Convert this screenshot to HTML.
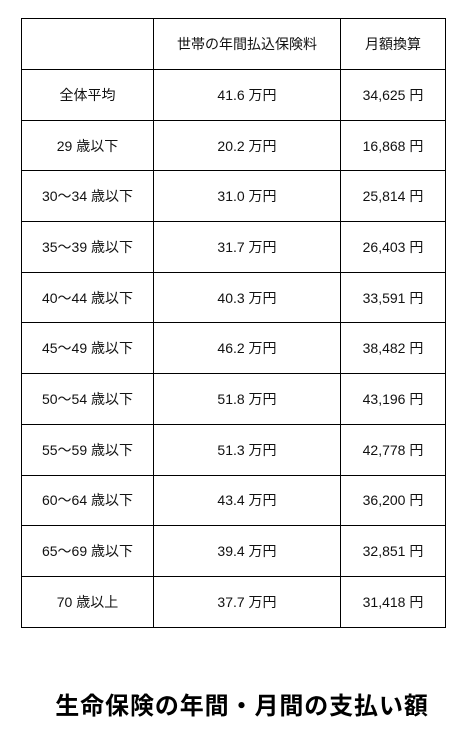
<!DOCTYPE html>
<html><head><meta charset="utf-8"><style>
body{margin:0;width:470px;height:739px;background:#fff;font-family:"Liberation Sans","Noto Sans CJK JP",sans-serif;color:#111;position:relative;overflow:hidden}
table{position:absolute;left:21px;top:18px;border-collapse:collapse;width:425px}
td{border:1px solid #000;height:50.7px;padding:0;text-align:center;font-size:14px;box-sizing:border-box}
tr.h td{height:51px}
.t{position:absolute;left:0;width:484px;top:686px;text-align:center;font-size:24px;font-weight:bold;letter-spacing:0.9px;color:#000}
</style></head><body>
<table>
<tr class="h"><td style="width:132px"></td><td style="width:187px">世帯の年間払込保険料</td><td>月額換算</td></tr>
<tr><td>全体平均</td><td>41.6 万円</td><td>34,625 円</td></tr>
<tr><td>29 歳以下</td><td>20.2 万円</td><td>16,868 円</td></tr>
<tr><td>30～34 歳以下</td><td>31.0 万円</td><td>25,814 円</td></tr>
<tr><td>35～39 歳以下</td><td>31.7 万円</td><td>26,403 円</td></tr>
<tr><td>40～44 歳以下</td><td>40.3 万円</td><td>33,591 円</td></tr>
<tr><td>45～49 歳以下</td><td>46.2 万円</td><td>38,482 円</td></tr>
<tr><td>50～54 歳以下</td><td>51.8 万円</td><td>43,196 円</td></tr>
<tr><td>55～59 歳以下</td><td>51.3 万円</td><td>42,778 円</td></tr>
<tr><td>60～64 歳以下</td><td>43.4 万円</td><td>36,200 円</td></tr>
<tr><td>65～69 歳以下</td><td>39.4 万円</td><td>32,851 円</td></tr>
<tr><td>70 歳以上</td><td>37.7 万円</td><td>31,418 円</td></tr>
</table>
<div class="t">生命保険の年間・月間の支払い額</div>
</body></html>
